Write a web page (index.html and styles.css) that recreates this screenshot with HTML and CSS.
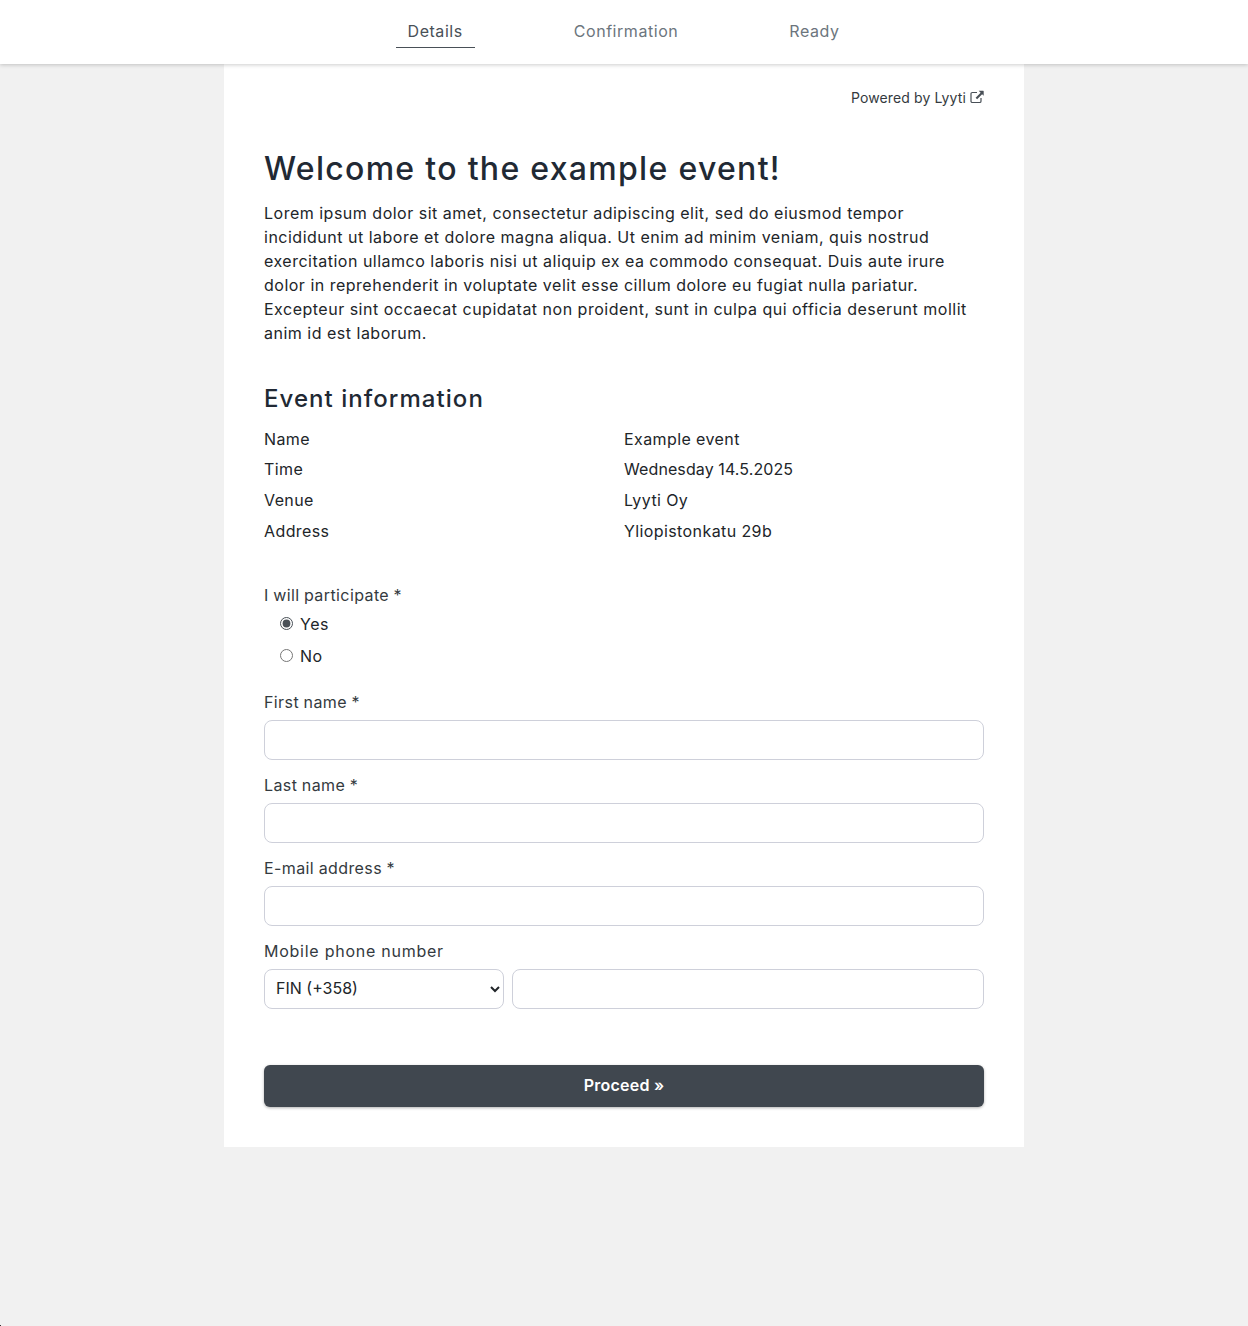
FILE: index.html
```html
<!DOCTYPE html>
<html lang="en">
<head>
<meta charset="utf-8">
<title>Example event</title>
<link rel="stylesheet" href="styles.css">
</head>
<body>
<header class="topbar">
  <nav class="steps">
    <a class="step step-active">Details</a>
    <a class="step">Confirmation</a>
    <a class="step">Ready</a>
  </nav>
</header>
<main class="card">
  <p class="powered">Powered by Lyyti
    <svg class="ext-icon" viewBox="0 0 14 14" width="14" height="14" aria-hidden="true">
      <path d="M11 8v3.2A1.3 1.3 0 0 1 9.7 12.500H2.300A1.300 1.300 0 0 1 1 11.200V3.800A1.300 1.300 0 0 1 2.300 2.500H7" fill="none" stroke="currentColor" stroke-width="1.200"/>
      <path d="M8.700.8h4.500a.5.5 0 0 1 .5.5v4.500l-1.600-1.500-5 5-1.500-1.500 5-5z" fill="currentColor"/>
    </svg>
  </p>
  <h1 class="title">Welcome to the example event!</h1>
  <p class="intro">Lorem ipsum dolor sit amet, consectetur adipiscing elit, sed do eiusmod tempor<br>incididunt ut labore et dolore magna aliqua. Ut enim ad minim veniam, quis nostrud<br>exercitation ullamco laboris nisi ut aliquip ex ea commodo consequat. Duis aute irure<br>dolor in reprehenderit in voluptate velit esse cillum dolore eu fugiat nulla pariatur.<br>Excepteur sint occaecat cupidatat non proident, sunt in culpa qui officia deserunt mollit<br>anim id est laborum.</p>
  <h2 class="subtitle">Event information</h2>
  <dl class="info">
    <dt>Name</dt><dd>Example event</dd>
    <dt>Time</dt><dd class="date">Wednesday 14.5.2025</dd>
    <dt>Venue</dt><dd>Lyyti Oy</dd>
    <dt>Address</dt><dd>Yliopistonkatu 29b</dd>
  </dl>
  <form class="form">
    <fieldset class="radios">
      <legend class="label">I will participate *</legend>
      <label class="radio"><input type="radio" name="p" checked><span>Yes</span></label>
      <label class="radio"><input type="radio" name="p"><span>No</span></label>
    </fieldset>
    <div class="field">
      <label class="label" for="f1">First name *</label>
      <input class="control" id="f1" type="text">
    </div>
    <div class="field">
      <label class="label" for="f2">Last name *</label>
      <input class="control" id="f2" type="text">
    </div>
    <div class="field">
      <label class="label" for="f3">E-mail address *</label>
      <input class="control" id="f3" type="text">
    </div>
    <div class="field">
      <label class="label label-wide" for="f4">Mobile phone number</label>
      <div class="phone">
        <select class="control code"><option>FIN (+358)</option></select>
        <input class="control" id="f4" type="text">
      </div>
    </div>
    <button class="proceed" type="button">Proceed »</button>
  </form>
</main>
<span class="corner-mark"></span>
</body>
</html>
```
FILE: styles.css
```css
* { box-sizing: border-box; }
html, body { margin: 0; padding: 0; }
body {
  min-height: 1326px;
  background: #f1f1f1;
  color: #212529;
  font-family: Inter, "Liberation Sans", sans-serif;
  font-size: 16px;
  line-height: 24px;
  letter-spacing: 0.5px;
}
.topbar {
  height: 64px;
  background: #fff;
  box-shadow: 0 1px 4px rgba(0, 0, 0, 0.2);
  position: relative;
  padding-top: 16px;
}
.steps { display: flex; justify-content: center; gap: 87px; padding-right: 1px; }
.step {
  height: 32px;
  padding: 3px 12px 0;
  color: #6c757d;
  letter-spacing: 0.55px;
}
.step-active { color: #495057; border-bottom: 1px solid #495057; }
.card {
  width: 800px;
  height: 1083px;
  margin: 0 auto;
  background: #fff;
  padding: 23px 40px 40px;
}
.powered {
  margin: 0 0 42px;
  text-align: right;
  font-size: 14px;
  line-height: 21px;
  letter-spacing: 0.12px;
  color: #343a40;
}
.ext-icon { vertical-align: -1px; color: #495057; }
.title {
  margin: 0 0 13px;
  font-size: 32px;
  line-height: 38px;
  font-weight: 500;
  letter-spacing: 1.3px;
  color: #212934;
}
.intro { margin: 0 0 39px; }
.subtitle {
  margin: 0 0 10.4px;
  font-size: 24px;
  line-height: 29px;
  font-weight: 500;
  letter-spacing: 1.05px;
  color: #212934;
}
.info {
  display: grid;
  grid-template-columns: 360px 360px;
  grid-auto-rows: 30.67px;
  align-items: center;
  margin: 0 0 36.6px;
  letter-spacing: 0.4px;
}
.info dt, .info dd { margin: 0; font-weight: 400; }
.info .date { letter-spacing: 0.1px; }
.form { display: flex; flex-direction: column; }
.radios { border: 0; margin: 0 0 18px; padding: 0; }
.label { display: block; padding: 0; color: #343a40; margin-bottom: 6px; letter-spacing: 0.4px; word-spacing: -0.4px; }
.label-wide { letter-spacing: 0.75px; word-spacing: 0; }
.radios .label { margin-bottom: 0; padding-bottom: 1px; }
.radio { display: flex; align-items: center; height: 32px; padding-left: 16px; }
.radio input { width: 13px; height: 13px; margin: 0 7px 0 0; accent-color: #495057; }
.field { margin-bottom: 13px; }
.control {
  display: block;
  width: 100%;
  height: 40px;
  padding: 0 12px;
  border: 1px solid #ced0da;
  border-radius: 8px;
  background: #fff;
  color: #212529;
  font: inherit;
  letter-spacing: inherit;
}
.phone { display: flex; gap: 8px; }
.code { width: 240px; flex: none; padding: 0 7px 2px; letter-spacing: 0; }
.phone input { flex: 1; }
.proceed {
  display: block;
  width: 100%;
  height: 42px;
  margin-top: 43px;
  padding: 0 0 2px;
  border: 0;
  border-radius: 6px;
  background: #40474f;
  color: #fff;
  font: inherit;
  font-weight: 600;
  letter-spacing: 0.25px;
  box-shadow: 0 1px 3px rgba(0, 0, 0, 0.3);
}
.corner-mark {
  position: absolute;
  left: 0;
  top: 1325px;
  width: 1px;
  height: 1px;
  background: #333;
}
```
